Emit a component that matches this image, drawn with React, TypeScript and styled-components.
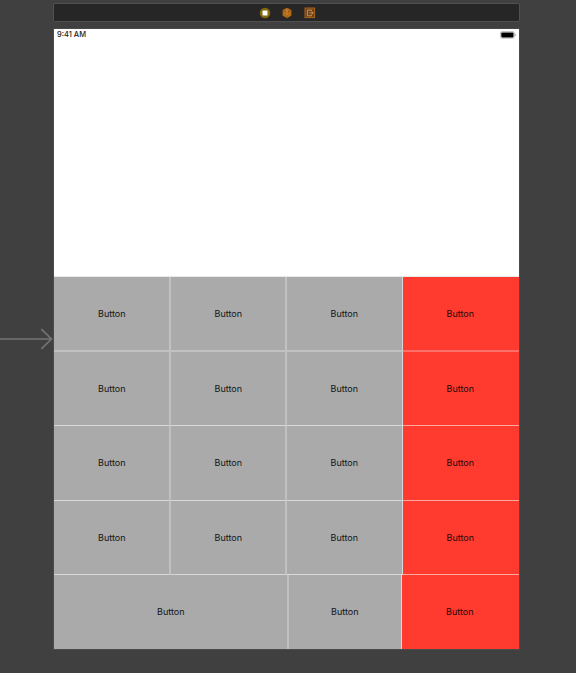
import React from "react";
import styled, { createGlobalStyle } from "styled-components";

const Global = createGlobalStyle`
  * { box-sizing: border-box; }
  body { margin: 0; background: #404040; font-family: Inter, "Liberation Sans", sans-serif; overflow: hidden; }
`;

const Editor = styled.main`
  display: grid;
  grid-template-columns: 54px 465px 57px;
  height: 673px;
  background: #404040;
`;

const EntryGutter = styled.div`
  padding-top: 328px;
  svg { display: block; }
`;

const Scene = styled.section`
  display: flex;
  flex-direction: column;
  padding-top: 3px;
`;

const SceneDock = styled.header`
  display: flex;
  flex-shrink: 0;
  justify-content: center;
  align-items: center;
  gap: 10.5px;
  height: 19px;
  margin: 0 -1px 7px;
  padding-left: 1px;
  background: #262626;
  border: 1px solid #505050;
  border-radius: 2px;
  svg { display: block; }
`;

const Device = styled.div`
  width: 465px;
  height: 620px;
  background: #fff;
  box-shadow: 0 0 0 1px #4b4b4b;
`;

const Display = styled.div`
  height: 248px;
  border-bottom: 1px solid #e9e9e9;
`;

const StatusBar = styled.div`
  display: flex;
  justify-content: space-between;
  align-items: center;
  height: 12px;
  padding: 0 2px 0 3px;
  color: #222;
  font-size: 7.5px;
  font-weight: 500;
  line-height: 12px;
  svg { display: block; }
`;

const KeyRow = styled.div<{ $height: number }>`
  display: flex;
  height: ${(p) => p.$height}px;
`;

const Key = styled.button<{
  $width: number;
  $accent?: boolean;
  $right?: string;
  $bottom?: string;
}>`
  position: relative;
  display: flex;
  flex: 0 0 ${(p) => p.$width}px;
  align-items: center;
  justify-content: center;
  margin: 0;
  padding: 0 1.4px 1px 0;
  border: 0;
  background: ${(p) => (p.$accent ? "#ff3b30" : "#aaaaaa")};
  color: ${(p) => (p.$accent ? "#260806" : "#141414")};
  font: 400 9px Inter, sans-serif;
  line-height: 12px;

  /* Hairline dividers overlay the key so its label stays centred. */
  &::after {
    content: "";
    position: absolute;
    inset: 0;
    border: 0 solid transparent;
    border-right: ${(p) => p.$right ?? "0 solid transparent"};
    border-bottom: ${(p) => p.$bottom ?? "0 solid transparent"};
  }
`;

const soft = "2px solid rgba(255, 255, 255, 0.27)";
const crisp = "1px solid rgba(255, 255, 255, 0.55)";

const rows = [
  { height: 75, bottom: soft },
  { height: 74, bottom: crisp },
  { height: 75, bottom: crisp },
  { height: 74, bottom: crisp },
];

const columns = [
  { width: 117, right: soft },
  { width: 116, right: soft },
  { width: 116, right: crisp },
  { width: 116, accent: true },
];

const lastRow = [
  { width: 235, right: soft },
  { width: 113, right: crisp },
  { width: 117, accent: true },
];

function ViewControllerIcon() {
  return (
    <svg width="12" height="12" viewBox="0 0 12 12">
      <circle cx="6" cy="6" r="5.3" fill="#83690d" />
      <rect x="3.5" y="3.5" width="5" height="5" rx=".4" fill="#fff" />
    </svg>
  );
}

function ResponderIcon() {
  return (
    <svg width="12" height="12" viewBox="0 0 12 12">
      <path d="M6 .8 10.4 3v5.6L6 11.2 1.6 8.6V3Z" fill="#b86b13" />
      <path d="m1.8 3.1 4.2 2 4.2-2M6 5.1v5.8" fill="none" stroke="#78501f" strokeWidth=".7" />
      <path d="m4.8 3.7 1.2-.6v5.3" fill="none" stroke="#ce9859" strokeWidth=".9" />
    </svg>
  );
}

function ExitIcon() {
  return (
    <svg width="12" height="12" viewBox="0 0 12 12">
      <rect x="1" y="1" width="9.6" height="9.6" fill="#6d4119" stroke="#aa6519" />
      <path d="M7.5 4.1V3H3.4v5.8h4.1V7.6M5.4 5.9h3.8M7.8 4.6l1.4 1.3-1.4 1.3" fill="none" stroke="#c79159" strokeWidth="1" />
    </svg>
  );
}

function Battery() {
  return (
    <svg width="17" height="8" viewBox="0 0 17 8">
      <rect x=".5" y=".6" width="13.8" height="6.6" rx="1.5" fill="#fff" stroke="#b0b0b0" strokeWidth=".8" />
      <rect x="1.3" y="1.4" width="12.2" height="5" rx=".8" fill="#000" />
      <path d="M15.2 2.9q1.1 1 0 2Z" fill="#999" stroke="#999" strokeWidth=".4" />
    </svg>
  );
}

export default function App() {
  return (
    <>
      <Global />
      <Editor>
        <EntryGutter>
          <svg width="54" height="22" viewBox="0 0 54 22">
            <defs>
              <linearGradient id="entry" gradientUnits="userSpaceOnUse" x1="0" x2="52" y1="0" y2="0">
                <stop stopColor="#747474" />
                <stop offset="1" stopColor="#747474" />
              </linearGradient>
            </defs>
            <path d="M0 11h51.5M41.3 1.2 51.5 11 41.3 20.8" fill="none" stroke="url(#entry)" strokeWidth="1.6" />
          </svg>
        </EntryGutter>
        <Scene>
          <SceneDock>
            <ViewControllerIcon />
            <ResponderIcon />
            <ExitIcon />
          </SceneDock>
          <Device>
            <Display>
              <StatusBar>
                <span>9:41 AM</span>
                <Battery />
              </StatusBar>
            </Display>
            {rows.map((row, i) => (
              <KeyRow key={i} $height={row.height}>
                {columns.map((c, j) => (
                  <Key key={j} $width={c.width} $accent={c.accent} $right={c.right} $bottom={row.bottom}>
                    Button
                  </Key>
                ))}
              </KeyRow>
            ))}
            <KeyRow $height={74}>
              {lastRow.map((c, j) => (
                <Key key={j} $width={c.width} $accent={c.accent} $right={c.right}>
                  Button
                </Key>
              ))}
            </KeyRow>
          </Device>
        </Scene>
      </Editor>
    </>
  );
}
